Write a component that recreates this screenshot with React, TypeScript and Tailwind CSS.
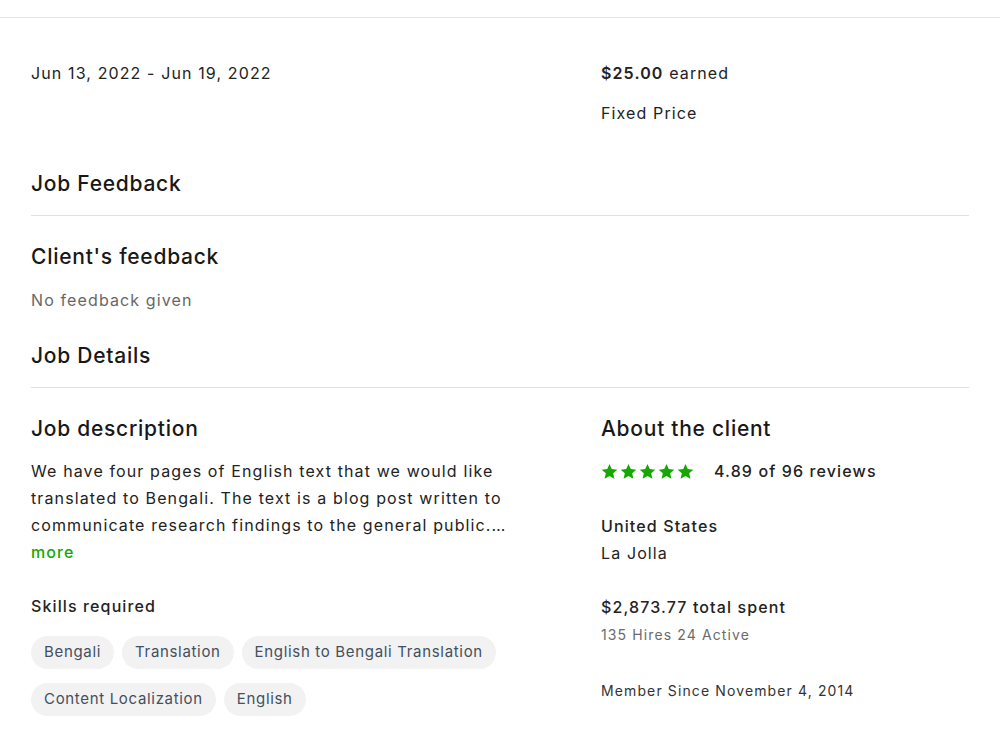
import { ReactNode } from 'react';

const skills = [
  ['Bengali', 'Translation', 'English to Bengali Translation'],
  ['Content Localization', 'English'],
];

function Star() {
  return (
    <svg viewBox="0 0 24 24" className="h-[17px] w-[17px]" fill="#14a800">
      <path d="M12 1.5l3.2 7.1 7.8.8-5.8 5.2 1.7 7.6L12 18.3l-6.9 3.9 1.7-7.6L1 9.4l7.8-.8z" />
    </svg>
  );
}

function Heading({ children }: { children: ReactNode }) {
  return (
    <h2 className="text-[21px] leading-[28px] font-medium tracking-[0.035em] text-[#181818]">{children}</h2>
  );
}

function Tag({ label }: { label: string }) {
  return (
    <span className="inline-flex h-[33px] items-center rounded-full bg-[#f2f2f2] px-[13px] text-[15px] tracking-[0.045em] text-[#43505e]">
      {label}
    </span>
  );
}

export default function App() {
  return (
    <div className="min-h-screen bg-white font-['Inter',sans-serif] tracking-[0.07em] text-[#222]">
      <div className="h-[18px] border-b border-[#e4e4e4]" />

      <div className="px-[31px]">
        {/* Contract summary */}
        <div className="grid grid-cols-[570px_1fr] pt-[43px]">
          <div className="text-[16px] leading-[24px]">Jun 13, 2022 - Jun 19, 2022</div>
          <div className="flex flex-col gap-[16px] text-[16px] leading-[24px]">
            <div>
              <span className="font-semibold">$25.00</span> earned
            </div>
            <div>Fixed Price</div>
          </div>
        </div>

        {/* Job Feedback */}
        <div className="mt-[45px] border-b border-[#e0e0e0] pb-[17px]">
          <Heading>Job Feedback</Heading>
        </div>
        <div className="pt-[27px]">
          <Heading>Client's feedback</Heading>
          <p className="mt-[17px] text-[16px] leading-[24px] text-[#676767]">No feedback given</p>
        </div>

        {/* Job Details */}
        <div className="mt-[30px] border-b border-[#e0e0e0] pb-[17px]">
          <Heading>Job Details</Heading>
        </div>

        <div className="grid grid-cols-[570px_1fr] pt-[27px]">
          <div>
            <Heading>Job description</Heading>
            <p className="mt-[15px] w-[482px] text-[16px] leading-[27px]">
              We have four pages of English text that we would like translated to Bengali. The text is a blog post
              written to communicate research findings to the general public.…
            </p>
            <div className="text-[16px] font-medium leading-[27px] text-[#14a800]">more</div>

            <div className="mt-[27px] text-[16px] font-medium leading-[27px] text-[#222]">Skills required</div>
            <div className="mt-[16px] flex flex-col gap-[14px]">
              {skills.map((row, i) => (
                <div key={i} className="flex gap-[8px]">
                  {row.map((s) => (
                    <Tag key={s} label={s} />
                  ))}
                </div>
              ))}
            </div>
          </div>

          <div>
            <Heading>About the client</Heading>
            <div className="mt-[15px] flex items-center gap-[20px] leading-[27px]">
              <div className="flex gap-[2px]">
                <Star />
                <Star />
                <Star />
                <Star />
                <Star />
              </div>
              <span className="text-[16px] font-medium">4.89 of 96 reviews</span>
            </div>

            <div className="mt-[28px] text-[16px] font-medium leading-[27px]">United States</div>
            <div className="text-[16px] leading-[27px]">La Jolla</div>

            <div className="mt-[27px] text-[16px] font-medium leading-[27px]">$2,873.77 total spent</div>
            <div className="text-[14px] leading-[27px] text-[#6b6b6b]">135 Hires 24 Active</div>

            <div className="mt-[29px] text-[14px] leading-[27px] text-[#333]">Member Since November 4, 2014</div>
          </div>
        </div>
      </div>
    </div>
  );
}
